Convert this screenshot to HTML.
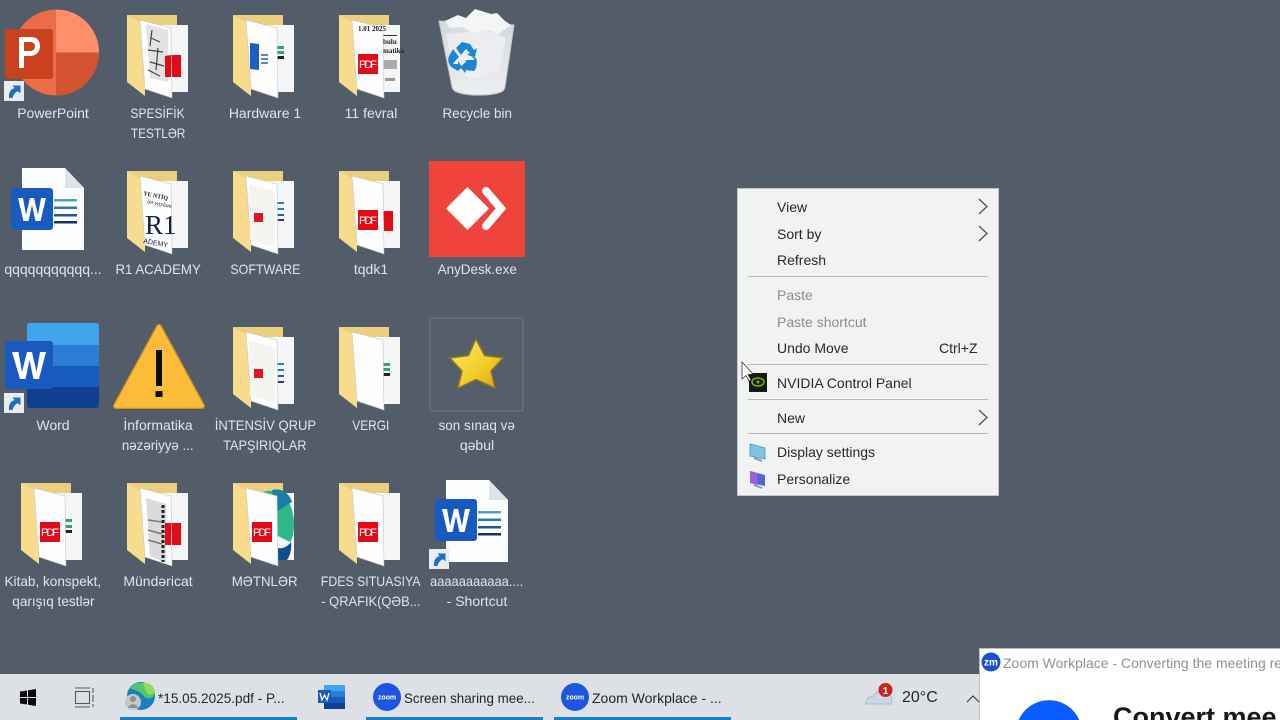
<!DOCTYPE html>
<html><head><meta charset="utf-8"><style>
html,body{margin:0;padding:0;width:1280px;height:720px;overflow:hidden;background:#535d69;font-family:"Liberation Sans","DejaVu Sans",sans-serif}
#w{position:absolute;left:0;top:0;width:1280px;height:720px;overflow:hidden}
#g{position:absolute;left:0;top:0;display:block}
.l{position:absolute;width:146px;margin-left:-20px;text-align:center;color:#e6e9ec;font-size:14px;line-height:20px;white-space:nowrap;opacity:.97}
.l span{display:inline-block}
.m{position:absolute;left:777px;color:#26282a;font-size:14px;line-height:18px;white-space:nowrap}
.d{color:#8b8d8f}
.s{position:absolute;left:748px;width:240px;height:1px;background:#b4b8ba}
.t{position:absolute;color:#22262a;font-size:14px;line-height:18px;white-space:nowrap;top:689px;transform-origin:left center}
</style></head><body><div id="w">
<svg id="g" width="1280" height="720" viewBox="0 0 1280 720" xmlns="http://www.w3.org/2000/svg">
<defs>
<linearGradient id="st" x1="0" y1="0" x2="1" y2="1"><stop offset="0" stop-color="#fdea6a"/><stop offset=".6" stop-color="#f3cb26"/><stop offset="1" stop-color="#d99f14"/></linearGradient>
<linearGradient id="bn" x1="0" y1="0" x2="0" y2="1"><stop offset="0" stop-color="#d5d9dd"/><stop offset="1" stop-color="#eceeef"/></linearGradient>
<symbol id="fb" width="64" height="84" viewBox="0 0 64 84" overflow="visible">
<polygon points="0,0 50,0 50,12 18,14" fill="#eccf7e"/>
<polygon points="28,10 61,10 61,77 44,77 28,77" fill="#f5f6f8"/>
<polygon points="0,0 18,10 18,81 0,67" fill="#f7dc8e"/>
</symbol>
<symbol id="fp" width="64" height="84" viewBox="0 0 64 84" overflow="visible">
<polygon points="13,5 44,13 45,83 18,74" fill="#fdfdfd" stroke="#c4c6c8" stroke-width=".6"/>
</symbol>
<symbol id="sc" width="20" height="20" viewBox="0 0 20 20">
<rect width="20" height="20" fill="#e9edf1"/>
<path d="M5 17C4.500 11 7 8 10.500 7L8.500 4.500H16.500V12.500L14 10.200C11.500 11 9.500 13 8.500 17Z" fill="#1f6fc4"/>
</symbol>
<symbol id="wbox" width="42" height="42" viewBox="0 0 42 42">
<rect width="42" height="42" rx="3" fill="#185abd"/>
<path d="M7 10H12L15 27L19 10H23L27 27L30 10H35L29.500 33H24.500L21 17L17.500 33H12.500Z" fill="#fff"/>
</symbol>
<symbol id="doc" width="64" height="84" viewBox="0 0 64 84">
<path d="M0 0H43L62 20V82H0Z" fill="#fbfcfd"/><path d="M43 0L62 20H43Z" fill="#dfe3e6"/>
<rect x="32" y="31" width="23" height="2.500" fill="#4ba1c9"/><rect x="32" y="38.500" width="23" height="2.500" fill="#2b7cb6"/><rect x="32" y="46" width="23" height="2.500" fill="#23559b"/><rect x="32" y="53" width="23" height="2.500" fill="#15306b"/>
</symbol>
</defs>

<!-- PowerPoint -->
<circle cx="56" cy="52.500" r="43" fill="#ed6c47"/>
<path d="M56 9.500A43 43 0 0 1 99 52.500H56Z" fill="#ff8f6b"/>
<path d="M99 52.500A43 43 0 0 1 56 95.500V52.500Z" fill="#d35230"/>
<rect x="5" y="29" width="48" height="50" rx="3" fill="#c8421d"/>
<path d="M19 37H31C38 37 40 42 40 46C40 52 36 56 30 56H24V68H19ZM24 42V51H30C33 51 35 49 35 46.500C35 43.500 33 42 30 42Z" fill="#fff"/>
<use href="#sc" x="4" y="81"/>

<!-- folders -->
<use href="#fb" x="127" y="15"/><use href="#fb" x="233" y="15"/><use href="#fb" x="339" y="15"/>
<use href="#fb" x="127" y="171"/><use href="#fb" x="233" y="171"/><use href="#fb" x="339" y="171"/>
<use href="#fb" x="233" y="327"/><use href="#fb" x="339" y="327"/>
<use href="#fb" x="21" y="483"/><use href="#fb" x="127" y="483"/><use href="#fb" x="233" y="483"/><use href="#fb" x="339" y="483"/>

<!-- back-paper details -->
<g><rect x="171" y="55" width="10" height="22" fill="#e30b17"/>
<rect x="277" y="46" width="7" height="3" fill="#2ca37a"/><rect x="277" y="51" width="7" height="3" fill="#2ca37a"/><rect x="277" y="56" width="7" height="3" fill="#222"/>
<rect x="383" y="35" width="14" height="1" fill="#333"/><text x="383" y="44" font-size="7" font-weight="bold" font-family="Liberation Serif" fill="#222">bulu</text><text x="383" y="53" font-size="7" font-weight="bold" font-family="Liberation Serif" fill="#222">matika</text><rect x="383" y="60" width="14" height="9" fill="#a9abad"/><rect x="385" y="78" width="10" height="3" fill="#999"/>
<rect x="277" y="202" width="7" height="2" fill="#2a7fc0"/><rect x="277" y="208" width="7" height="2" fill="#2a7fc0"/><rect x="277" y="214" width="7" height="2" fill="#2a5f9f"/><rect x="277" y="219" width="7" height="2" fill="#1e3f7f"/>
<rect x="383" y="211" width="10" height="20" fill="#e30b17"/>
<rect x="277" y="363" width="7" height="2" fill="#2a7fc0"/><rect x="277" y="369" width="7" height="2" fill="#2a7fc0"/><rect x="277" y="375" width="7" height="2" fill="#2a5f9f"/><rect x="277" y="381" width="7" height="2" fill="#1e3f7f"/>
<rect x="382" y="363" width="8" height="3" fill="#2ca37a"/><rect x="382" y="368" width="8" height="3" fill="#2ca37a"/><rect x="382" y="373" width="8" height="3" fill="#222"/>
<rect x="65" y="519" width="7" height="3" fill="#2ca37a"/><rect x="65" y="525" width="7" height="3" fill="#2ca37a"/><rect x="65" y="530" width="7" height="3" fill="#222"/>
<rect x="171" y="523" width="10" height="22" fill="#e30b17"/>
<path d="M263 492C278 487 294 498 294 525C294 532 293 538 290 542L276 535Z" fill="#2cb88a"/><path d="M272 490C282 488 289 493 292 502L276 512Z" fill="#1a7fa6"/><path d="M277 548C284 549 288 546 291 542C292 549 290 556 287 560L277 560Z" fill="#0f4f8f"/>
</g>
<use href="#fp" x="127" y="15"/><use href="#fp" x="233" y="15"/><use href="#fp" x="339" y="15"/>
<use href="#fp" x="127" y="171"/><use href="#fp" x="233" y="171"/><use href="#fp" x="339" y="171"/>
<use href="#fp" x="233" y="327"/><use href="#fp" x="339" y="327"/>
<use href="#fp" x="21" y="483"/><use href="#fp" x="127" y="483"/><use href="#fp" x="233" y="483"/><use href="#fp" x="339" y="483"/>

<!-- front paper details -->
<g>
<path d="M146 24L168 30V82L150 78Z" fill="#cfd1d3" opacity=".6"/><path d="M151 38L160 42M148 50L163 52M150 62L164 66M152 30L150 46M158 48L156 70M148 70L160 76" stroke="#444" stroke-width="1.200"/>
<path d="M171 55V77H165V56Z" fill="#e30b17"/>
<path d="M250 43L259 44V70L250 69Z" fill="#1c5fc0"/><path d="M261 55H268M261 59H268M261 63H268" stroke="#2a5fa6" stroke-width="1.500"/>
<rect x="358" y="54" width="20" height="20" fill="#e30b17"/><text x="359" y="68" font-size="11" textLength="18" fill="#fff">PDF</text>
<text x="358" y="31" font-size="7" font-weight="bold" font-family="Liberation Serif" fill="#222">1.01 2025</text>
<text x="143" y="195" font-size="6" font-weight="bold" font-family="Liberation Serif" fill="#222" transform="rotate(12 143 195)">YE NTİQ</text><text x="147" y="203" font-size="6" font-style="italic" font-family="Liberation Serif" fill="#222" transform="rotate(12 147 203)">ün yaylam</text>
<text x="145" y="234" font-size="27" font-family="Liberation Serif" fill="#15204a">R1</text><text x="143" y="243" font-size="7" fill="#15204a" transform="rotate(10 143 243)">ADEMY</text>
<path d="M249 184L275 192V247L250 240Z" fill="#f4f4f1"/><rect x="254" y="213" width="9" height="9" fill="#e01520"/>
<path d="M249 340L275 348V403L250 396Z" fill="#f4f4f1"/><rect x="254" y="369" width="9" height="9" fill="#e01520"/>
<rect x="358" y="210" width="20" height="20" fill="#e30b17"/><text x="359" y="224" font-size="11" textLength="18" fill="#fff">PDF</text>
<rect x="40" y="522" width="20" height="20" fill="#e30b17"/><text x="41" y="536" font-size="11" textLength="18" fill="#fff">PDF</text>
<path d="M146 498L166 504V563L150 556Z" fill="#d9dadb"/><path d="M163 505V562" stroke="#222" stroke-width="3" stroke-dasharray="3 2"/><path d="M148 520L162 522M148 530L162 534M148 540L162 544" stroke="#777" stroke-width="1.500"/>
<path d="M171 523V545H165V523Z" fill="#e30b17"/>
<rect x="252" y="522" width="20" height="20" fill="#e30b17"/><text x="253" y="536" font-size="11" textLength="18" fill="#fff">PDF</text>
<rect x="358" y="522" width="20" height="20" fill="#e30b17"/><text x="359" y="536" font-size="11" textLength="18" fill="#fff">PDF</text>
</g>

<!-- Recycle bin -->
<path d="M439 21L514 25L505 87Q504 92 498 93C488 96 466 96 457 92Q453 91 452 87Z" fill="url(#bn)" stroke="#c0c5ca" stroke-width="1"/>
<path d="M445 21L458 15L466 18L475 9L491 14L497 13L505 21L511 25L497 35L490 30L475 34L462 27L450 28Z" fill="#f4f5f6"/>
<path d="M446 34L486 30L506 38L500 70L470 80L452 62Z" fill="#eff0f2" opacity=".8"/>
<g fill="#1d84d4">
<path d="M456 48L462 42L470 44L474 50L477 48L475 57L467 55L470 53L466 49L461 55Z"/>
<path d="M453 49L459 57L456 60L453 64L458 64L458 61L462 67L458 71L453 68C449 66 447 60 449 56Z"/>
<path d="M466 60H475L471 56L476 58C478 62 476 70 474 71L466 70L465 73L460 67L466 62Z"/>
</g>

<!-- Word doc row 2 -->
<use href="#doc" x="22" y="168"/><use href="#wbox" x="11" y="188"/>

<!-- AnyDesk -->
<rect x="429" y="161" width="96" height="96" fill="#ef443b"/>
<polygon points="467.500,187 489,208.500 467.500,230 446,208.500" fill="#fff"/>
<path d="M486 191L501 208.500L486 226" fill="none" stroke="#fff" stroke-width="8" stroke-linecap="round" stroke-linejoin="miter"/>

<!-- Word -->
<path d="M30 323H96Q99 323 99 326V345H27V326Q27 323 30 323Z" fill="#41a5ee"/>
<rect x="27" y="345" width="72" height="21" fill="#2b7cd3"/><rect x="27" y="366" width="72" height="21" fill="#185abd"/>
<path d="M27 387H99V405Q99 408 96 408H30Q27 408 27 405Z" fill="#103f91"/>
<rect x="5" y="341" width="48" height="48" rx="3" fill="#185abd"/>
<path d="M12 352H18.500L22 372L27 352H32L36.500 372L40 352H46L39 379H33.500L29.500 360L25.500 379H20Z" fill="#fff"/>
<use href="#sc" x="4" y="393"/>

<!-- Warning -->
<path d="M159 327L202 406H116Z" fill="#c99022" stroke="#c99022" stroke-width="6" stroke-linejoin="round"/>
<path d="M159 327L202 406H116Z" fill="#fcbc3a" stroke="#fcbc3a" stroke-width="3.500" stroke-linejoin="round"/>
<rect x="156" y="350" width="6" height="36" fill="#0c0c0c"/><rect x="155.500" y="391" width="7" height="6" fill="#0c0c0c"/>

<!-- Star tile -->
<rect x="430" y="318" width="93" height="93" fill="#555f6b" stroke="#6f7884" stroke-width="1"/>
<path d="M476 339L484.500 355.500L503 358L491 371L495 388L476 379.500L458 388L462 371L450 358L468.500 355.500Z" fill="url(#st)" stroke="#8e7a22" stroke-width="1.500" stroke-linejoin="round"/>

<!-- Word doc row 4 -->
<use href="#doc" x="446" y="480"/><use href="#wbox" x="435" y="499"/>
<use href="#sc" x="429" y="549"/>

<!-- Context menu -->
<rect x="737.500" y="188.500" width="261" height="307" fill="#f1f2f2" stroke="#c2c5c8"/>
<g fill="none" stroke="#4b4d50" stroke-width="1.200">
<path d="M979 199L987 206.500L979 214"/><path d="M979 226L987 233.500L979 241"/><path d="M979 410L987 417.500L979 425"/>
</g>
<rect x="749" y="373" width="18" height="19" fill="#161a12"/>
<ellipse cx="758" cy="382" rx="6" ry="4" fill="none" stroke="#76b900" stroke-width="1.500"/><circle cx="758" cy="382" r="1.500" fill="#76b900"/>
<path d="M750 444L765 448V459L750 456Z" fill="#7cc5e8" stroke="#4f8fb6" stroke-width=".8"/><path d="M754 458L762 461" stroke="#8a98a6" stroke-width="2"/>
<path d="M750 471L765 475V486L750 483Z" fill="#5b63d8"/><path d="M750 471L757 473V485L750 483Z" fill="#9c5fd8"/><path d="M754 485L762 488" stroke="#8a98a6" stroke-width="2"/>
<path d="M742 362V379L746 375.500L749 381L751 380L748 374.500L753 374Z" fill="#fff" stroke="#3a3a3a" stroke-width=".8"/>

<!-- Taskbar -->
<rect x="0" y="674" width="1280" height="46" fill="#dde1e6"/>
<rect x="120" y="717" width="177" height="3" fill="#1a7fc4"/><rect x="366" y="717" width="177" height="3" fill="#1a7fc4"/><rect x="554" y="717" width="177" height="3" fill="#1a7fc4"/>
<path d="M20 691.500L27 690.500V697H20ZM28 690.300L36 689V697H28ZM20 698H27V704.500L20 703.500ZM28 698H36V706L28 704.700Z" fill="#0a0a0a"/>
<g fill="none" stroke="#555a60" stroke-width="1.100"><rect x="75.500" y="691.500" width="14" height="12"/><path d="M75 688H90M75 707H90M93 688V693M93 695V702M93 704V707"/></g>
<circle cx="141" cy="696" r="14" fill="#1a7fbf"/><path d="M130 688C136 680 150 681 155 692C154 700 146 700 143 695C138 690 133 690 130 688Z" fill="#53c66c"/><path d="M143 683C150 682 154 686 155 692C152 696 147 695 146 691Z" fill="#8fdc5c"/>
<circle cx="133" cy="702" r="8" fill="#c6c9cc"/><circle cx="133" cy="699" r="3" fill="#8b8e92"/><path d="M128 708C129 703 137 703 138 708Z" fill="#8b8e92"/>
<rect x="324" y="685" width="21" height="6" fill="#41a5ee"/><rect x="324" y="691" width="21" height="6" fill="#2b7cd3"/><rect x="324" y="697" width="21" height="6" fill="#185abd"/><rect x="324" y="703" width="21" height="6" fill="#103f91"/>
<rect x="318" y="690" width="13" height="13" fill="#185abd"/><path d="M320 693L322 700L324.500 695L327 700L329 693" fill="none" stroke="#fff" stroke-width="1.300"/>
<circle cx="387" cy="697" r="14" fill="#1c55e0"/><text x="387" y="699.500" text-anchor="middle" font-size="7" font-weight="bold" fill="#fff">zoom</text>
<circle cx="575" cy="697" r="14" fill="#1c55e0"/><text x="575" y="699.500" text-anchor="middle" font-size="7" font-weight="bold" fill="#fff">zoom</text>
<path d="M866 704C865 698 870 696 873 697C875 691 884 689 888 694C893 696 892 702 891 704Z" fill="#c9d8e8" stroke="#a9bdd2"/>
<circle cx="885.500" cy="690" r="7" fill="#c6271d"/><text x="885.500" y="694" text-anchor="middle" font-size="10" font-weight="bold" fill="#fff">1</text>
<path d="M967 702L973 696L979 702" fill="none" stroke="#33373b" stroke-width="1.100"/>

<!-- Zoom dialog -->
<rect x="980" y="649" width="300" height="71" fill="#fff"/>
<path d="M979.500 720V648.500H1280" fill="none" stroke="#b9bcc0"/>
<circle cx="991" cy="662" r="9.500" fill="#1b50c8"/><text x="991" y="665.500" text-anchor="middle" font-size="10" font-weight="bold" fill="#fff">zm</text>
<path d="M1018.700 720A33 33 0 0 1 1079.300 720Z" fill="#0b5cff"/>
</svg>

<div class="l" style="left:0;top:103px">PowerPoint</div>
<div class="l" style="left:105px;top:103px"><span style="transform:scaleX(.86)">SPESİFİK</span><br><span style="transform:scaleX(.85)">TESTLƏR</span></div>
<div class="l" style="left:212px;top:103px">Hardware 1</div>
<div class="l" style="left:318px;top:103px">11 fevral</div>
<div class="l" style="left:424px;top:103px"><span style="transform:scaleX(.96)">Recycle bin</span></div>
<div class="l" style="left:0;top:259px">qqqqqqqqqqq...</div>
<div class="l" style="left:105px;top:259px"><span style="transform:scaleX(.945)">R1 ACADEMY</span></div>
<div class="l" style="left:212px;top:259px"><span style="transform:scaleX(.89)">SOFTWARE</span></div>
<div class="l" style="left:318px;top:259px">tqdk1</div>
<div class="l" style="left:424px;top:259px"><span style="transform:scaleX(.96)">AnyDesk.exe</span></div>
<div class="l" style="left:0;top:415px">Word</div>
<div class="l" style="left:105px;top:415px">İnformatika<br><span style="transform:scaleX(.95)">nəzəriyyə ...</span></div>
<div class="l" style="left:212px;top:415px"><span style="transform:scaleX(.93)">İNTENSİV QRUP</span><br><span style="transform:scaleX(.91)">TAPŞIRIQLAR</span></div>
<div class="l" style="left:318px;top:415px"><span style="transform:scaleX(.85)">VERGI</span></div>
<div class="l" style="left:424px;top:415px"><span style="transform:scaleX(.96)">son sınaq və</span><br>qəbul</div>
<div class="l" style="left:0;top:571px"><span style="transform:scaleX(.97)">Kitab, konspekt,</span><br><span style="transform:scaleX(.97)">qarışıq testlər</span></div>
<div class="l" style="left:105px;top:571px">Mündəricat</div>
<div class="l" style="left:212px;top:571px"><span style="transform:scaleX(.95)">MƏTNLƏR</span></div>
<div class="l" style="left:318px;top:571px"><span style="transform:scaleX(.88)">FDES SITUASIYA</span><br><span style="transform:scaleX(.92)">- QRAFIK(QƏB...</span></div>
<div class="l" style="left:424px;top:571px"><span style="transform:scaleX(.92)">aaaaaaaaaaa....</span><br>- Shortcut</div>

<div class="m" style="top:198px">View</div>
<div class="m" style="top:225px">Sort by</div>
<div class="m" style="top:251px">Refresh</div>
<div class="s" style="top:276px"></div>
<div class="m d" style="top:286px">Paste</div>
<div class="m d" style="top:313px">Paste shortcut</div>
<div class="m" style="top:339px">Undo Move</div>
<div class="m" style="top:339px;left:939px">Ctrl+Z</div>
<div class="s" style="top:364px"></div>
<div class="m" style="top:374px">NVIDIA Control Panel</div>
<div class="s" style="top:399px"></div>
<div class="m" style="top:409px">New</div>
<div class="s" style="top:433px"></div>
<div class="m" style="top:443px">Display settings</div>
<div class="m" style="top:470px">Personalize</div>

<div class="t" style="left:158px;transform:scaleX(.97)">*15.05.2025.pdf - P...</div>
<div class="t" style="left:404px;transform:scaleX(.955)">Screen sharing mee...</div>
<div class="t" style="left:592px">Zoom Workplace - ...</div>
<div class="t" style="left:902px;font-size:16px">20°C</div>
<div style="position:absolute;left:1003px;top:654px;color:#8c8f93;font-size:14px;line-height:18px;white-space:nowrap">Zoom Workplace - Converting the meeting re</div>
<div style="position:absolute;left:1113px;top:702px;height:18px;overflow:hidden;color:#17181a;font-size:27px;font-weight:bold;line-height:30px;white-space:nowrap">Convert mee</div>
</div></body></html>
